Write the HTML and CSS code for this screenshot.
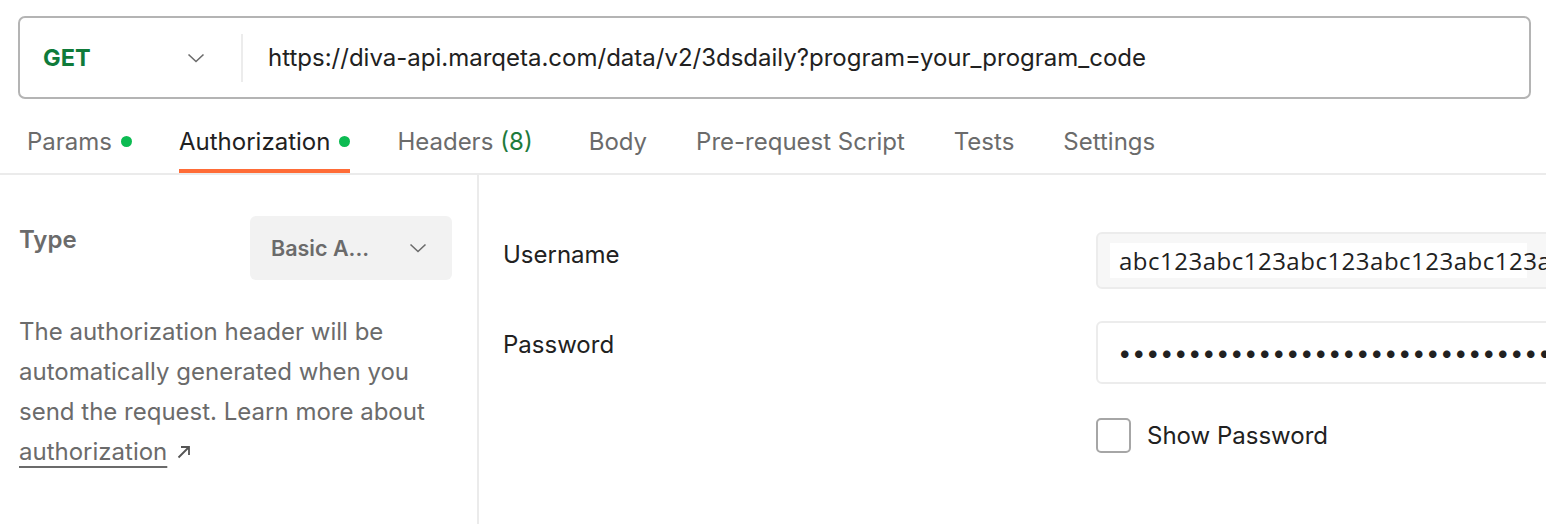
FILE: index.html
```html
<!DOCTYPE html>
<html>
<head>
<meta charset="utf-8">
<link rel="stylesheet" href="styles.css">
</head>
<body>
<div class="page">
  <div class="urlbar">
    <div class="method">
      <span class="method-name">GET</span>
      <svg class="chev" width="18" height="18" viewBox="0 0 18 18"><path d="M1.5 5.5 L9 12.5 L16.5 5.5" fill="none" stroke="#6b6b6b" stroke-width="1.6"/></svg>
    </div>
    <div class="divider"></div>
    <div class="url">https://diva-api.marqeta.com/data/v2/3dsdaily?program=your_program_code</div>
  </div>

  <div class="tabs">
    <div class="tab params">Params<span class="dot"></span></div>
    <div class="tab active">Authorization<span class="dot"></span></div>
    <div class="tab headers">Headers <span class="count">(8)</span></div>
    <div class="tab">Body</div>
    <div class="tab">Pre-request Script</div>
    <div class="tab">Tests</div>
    <div class="tab">Settings</div>
  </div>

  <div class="content">
    <div class="left">
      <div class="type-row">
        <div class="type-label">Type</div>
        <div class="type-select">
          <span>Basic A...</span>
          <svg width="18" height="18" viewBox="0 0 18 18"><path d="M1.5 5.5 L9 12.5 L16.5 5.5" fill="none" stroke="#6b6b6b" stroke-width="1.6"/></svg>
        </div>
      </div>
      <p class="desc">The authorization header will be automatically generated when you send the request. Learn more about <a class="link">authorization</a> <svg class="arrow" width="14" height="14" viewBox="0 0 14 14"><path d="M1.5 12.5 L12 2 M4 2 H12 V10" fill="none" stroke="#555555" stroke-width="1.8"/></svg></p>
    </div>
    <div class="right">
      <div class="field user-field">
        <div class="label">Username</div>
        <div class="input user-input"><span class="user-text">abc123abc123abc123abc123abc123ab</span></div>
      </div>
      <div class="field pass-field">
        <div class="label">Password</div>
        <div class="input pass-input">••••••••••••••••••••••••••••••••••••</div>
      </div>
      <div class="show-row">
        <div class="checkbox"></div>
        <span>Show Password</span>
      </div>
    </div>
  </div>
</div>
</body>
</html>
```
FILE: styles.css
```css
* { box-sizing: border-box; }
html, body { margin: 0; padding: 0; background: #fff; }
body {
  font-family: Inter, "Noto Sans", sans-serif;
  color: #212121;
  width: 1546px;
  height: 524px;
  overflow: hidden;
}
.page { width: 1546px; }

.urlbar {
  margin: 16px 15px 0 18px;
  height: 83px;
  border: 2px solid #b4b4b4;
  border-radius: 7px;
  display: flex;
  align-items: center;
}
.method {
  width: 221px;
  display: flex;
  align-items: center;
  justify-content: space-between;
  padding: 0 36px 0 23px;
}
.method-name {
  color: #0f7b3a;
  font-weight: 700;
  font-size: 23.5px;
}
.divider {
  width: 2px;
  height: 48px;
  background: #ececec;
}
.url {
  margin-left: 25px;
  font-size: 24px;
  color: #212121;
  white-space: nowrap;
}

.tabs {
  display: flex;
  height: 76px;
  border-bottom: 2px solid #ebebeb;
  padding-left: 27px;
}
.tab {
  font-size: 24px;
  color: #6b6b6b;
  display: flex;
  align-items: center;
  height: 74px;
  margin-right: 49px;
  border-bottom: 4px solid transparent;
  padding-top: 14px;
}
.tab.params { margin-right: 47px; }
.tab.active {
  color: #212121;
  border-bottom-color: #ff6c37;
  margin-right: 47px;
}
.tab.headers { margin-right: 56px; }
.dot {
  width: 11px;
  height: 11px;
  border-radius: 50%;
  background: #0cbb52;
  margin-left: 9px;
}
.count { color: #1e7a3c; margin-left: 7px; }

.content {
  display: flex;
  height: 350px;
}
.left {
  width: 479px;
  border-right: 2px solid #ebebeb;
  padding: 41px 25px 0 19px;
  flex: none;
}
.type-row {
  display: flex;
  justify-content: space-between;
  align-items: flex-start;
}
.type-label {
  font-size: 24px;
  font-weight: 600;
  color: #6b6b6b;
  margin-top: 9px;
}
.type-select {
  width: 202px;
  height: 64px;
  background: #f2f2f2;
  border-radius: 6px;
  display: flex;
  align-items: center;
  justify-content: space-between;
  padding: 0 25px 0 21px;
  font-size: 21.5px;
  font-weight: 600;
  color: #6b6b6b;
}
.desc {
  margin: 32px 0 0 0;
  font-size: 24px;
  line-height: 40px;
  color: #6b6b6b;
}
.link {
  color: #6b6b6b;
  text-decoration: underline;
  text-underline-offset: 6px;
  text-decoration-thickness: 2px;
}
.arrow { margin-left: 3px; vertical-align: 1px; }

.right {
  flex: 1;
  padding: 57px 0 0 24px;
  overflow: hidden;
}
.field {
  display: flex;
  align-items: flex-start;
}
.label {
  width: 593px;
  flex: none;
  font-size: 24px;
  color: #212121;
}
.input {
  flex: none;
  width: 520px;
  border: 2px solid #ececec;
  border-radius: 6px;
  display: flex;
  align-items: center;
  white-space: nowrap;
  overflow: hidden;
}
.user-field .label { margin-top: 8px; }
.user-input {
  height: 57px;
  background: #f7f7f7;
  padding-left: 12px;
}
.user-text {
  font-family: "Open Sans", sans-serif;
  font-size: 24px;
  letter-spacing: 0.5px;
  background: linear-gradient(to right, #fff 417px, transparent 417px);
  padding: 1px 0 1px 9px;
  color: #212121;
}
.pass-field { margin-top: 32px; }
.pass-field .label { margin-top: 9px; }
.pass-input {
  height: 63px;
  background: #fff;
  padding-left: 20px;
  font-size: 24px;
  letter-spacing: 0.5px;
  color: #212121;
}
.show-row {
  display: flex;
  align-items: center;
  margin: 34px 0 0 593px;
  font-size: 24px;
  color: #212121;
}
.checkbox {
  width: 35px;
  height: 35px;
  border: 2px solid #a6a6a6;
  border-radius: 5px;
  margin-right: 16px;
}
```
